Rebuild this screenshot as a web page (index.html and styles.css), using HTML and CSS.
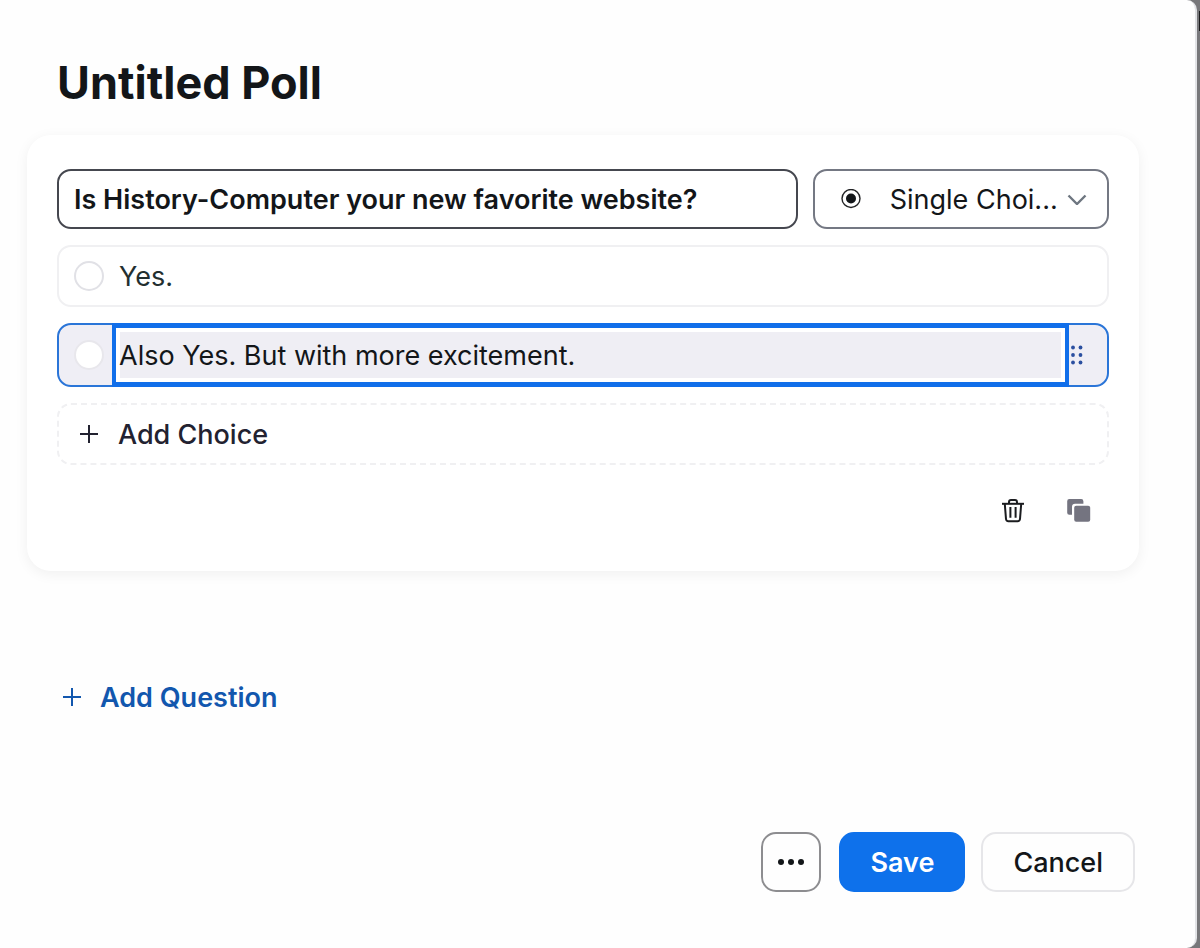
FILE: index.html
```html
<!DOCTYPE html>
<html lang="en">
<head>
    <meta charset="UTF-8">
    <meta name="viewport" content="width=device-width, initial-scale=1.0">
    <title>Untitled Poll</title>
    <link rel="stylesheet" href="styles.css">
</head>
<body>

    <main class="dialog">
        <h1>Untitled Poll</h1>

        <form class="card">
            <div class="question-row">
                <input class="question" type="text" aria-label="Question" value="Is History-Computer your new favorite website?">
                <div class="type">
                    <svg class="type-icon" width="20" height="20" viewBox="0 0 20 20" aria-hidden="true">
                        <circle cx="10" cy="9.5" r="9" fill="none" stroke="#222325" stroke-width="1.4"/>
                        <circle cx="10" cy="9.5" r="5" fill="#131619"/>
                    </svg>
                    <select class="type-select" aria-label="Question type">
                        <option>Single Choi...</option>
                    </select>
                    <svg class="type-arrow" width="20" height="12" viewBox="0 0 20 12" aria-hidden="true">
                        <path d="M1.5 2.5L10 11L18.5 2.5" fill="none" stroke="#6e7680" stroke-width="2.4"/>
                    </svg>
                </div>
            </div>

            <div class="choice">
                <input class="radio" type="radio" name="answer" aria-label="Choice 1">
                <input class="choice-text" type="text" aria-label="Choice 1 text" value="Yes.">
            </div>

            <div class="choice active">
                <input class="radio" type="radio" name="answer" aria-label="Choice 2">
                <input class="choice-text" type="text" aria-label="Choice 2 text" value="Also Yes. But with more excitement.">
                <svg class="handle" width="12" height="20" viewBox="0 0 12 20" fill="#2b4fa0" aria-hidden="true">
                    <circle cx="2" cy="2.5" r="1.9"/>
                    <circle cx="9.5" cy="2.5" r="1.9"/>
                    <circle cx="2" cy="10" r="1.9"/>
                    <circle cx="9.5" cy="10" r="1.9"/>
                    <circle cx="2" cy="17.5" r="1.9"/>
                    <circle cx="9.5" cy="17.5" r="1.9"/>
                </svg>
            </div>

            <button class="add-choice" type="button">
                <svg width="18" height="18" viewBox="0 0 18 18" aria-hidden="true">
                    <path d="M9 0V18M0 9H18" stroke="currentColor" stroke-width="2"/>
                </svg>
                Add Choice
            </button>

            <div class="tools">
                <button class="tool" type="button" aria-label="Delete">
                    <svg width="24" height="24" viewBox="0 0 24 24" fill="none" stroke="#1b1c1f" stroke-width="2" aria-hidden="true">
                        <path d="M1 4.8H23"/>
                        <path d="M8 4.5V3Q8 1 10 1H14Q16 1 16 3V4.5"/>
                        <path d="M3.8 5L5 20Q5.2 22.2 7.4 22.2H16.6Q18.8 22.2 19 20L20.2 5"/>
                        <path d="M9.4 8V18.8M14.6 8V18.8"/>
                    </svg>
                </button>
                <button class="tool" type="button" aria-label="Duplicate">
                    <svg width="24" height="24" viewBox="0 0 24 24" fill="#747480" aria-hidden="true">
                        <path d="M2.3 0H14.2Q16.4 0 16.4 2.2V4.8H8Q5 4.8 5 7.8V15.8H2.3Q0.2 15.8 0.2 13.8V2.2Q0.2 0 2.3 0Z"/>
                        <rect x="7.2" y="6.8" width="16" height="16" rx="2"/>
                    </svg>
                </button>
            </div>
        </form>

        <button class="add-question" type="button">
            <svg width="18" height="18" viewBox="0 0 18 18" aria-hidden="true">
                <path d="M9 0V18M0 9H18" stroke="currentColor" stroke-width="2"/>
            </svg>
            Add Question
        </button>

        <div class="actions">
            <button class="btn more" type="button" aria-label="More">
                <svg width="28" height="6" viewBox="0 0 28 6" fill="#131619" aria-hidden="true">
                    <circle cx="4" cy="3" r="3"/>
                    <circle cx="14" cy="3" r="3"/>
                    <circle cx="24" cy="3" r="3"/>
                </svg>
            </button>
            <button class="btn save" type="button">Save</button>
            <button class="btn cancel" type="button">Cancel</button>
        </div>
    </main>

</body>
</html>
```
FILE: styles.css
```css
* {
    box-sizing: border-box;
}

body {
    margin: 0;
    padding-right: 3px;
    background: #77777a linear-gradient(#1c1c1e, #1c1c1e) right 11px / 1px 20px no-repeat;
    font-family: Inter, "Liberation Sans", sans-serif;
    font-size: 27px;
    color: #131619;
}

button, input, select {
    font: inherit;
    color: inherit;
    margin: 0;
}

button {
    background: none;
    border: none;
    padding: 0;
    cursor: pointer;
}

svg {
    display: block;
    flex: none;
}

.dialog {
    display: flex;
    flex-direction: column;
    min-height: 100vh;
    padding: 55px 56px 56px 27px;
    background-color: #fefefe;
    border-right: 2px solid #e2e3e6;
    border-radius: 0 10px 10px 0;
}

h1 {
    margin: 0 30px 24px;
    font-size: 45px;
    line-height: 56px;
    font-weight: 700;
}

.card {
    display: flex;
    flex-direction: column;
    gap: 16px;
    padding: 34px 30px 48px;
    background-color: #fff;
    border-radius: 24px;
    box-shadow: 0 3px 14px rgba(0, 0, 0, 0.06);
}

.question-row {
    display: grid;
    grid-template-columns: 5fr 2fr;
    gap: 15px;
}

.question {
    min-width: 0;
    height: 60px;
    padding: 0 15px;
    border: 2px solid #45474f;
    border-radius: 14px;
    background: none;
    font-weight: 600;
}

.type {
    display: grid;
    grid-template-columns: 26px 20px 1fr 20px 20px;
    align-items: center;
    min-width: 0;
    height: 60px;
    border: 2px solid #747883;
    border-radius: 14px;
}

.type-icon {
    grid-area: 1 / 2;
}

.type-select {
    grid-area: 1 / 1 / 2 / 6;
    min-width: 0;
    height: 56px;
    padding: 0 44px 0 75px;
    border: none;
    background: none;
    appearance: none;
}

.type-arrow {
    grid-area: 1 / 4;
}

.choice {
    display: flex;
    align-items: center;
    height: 62px;
    padding: 0 38px 0 15px;
    border: 2px solid #f0f0f2;
    border-radius: 14px;
}

.radio {
    flex: none;
    width: 30px;
    height: 30px;
    border: 2px solid #e1e1e6;
    border-radius: 50%;
    background-color: #fff;
    appearance: none;
}

.choice-text {
    flex: 1;
    min-width: 0;
    height: 58px;
    margin-left: 8px;
    padding: 0 3px;
    border: 4px solid transparent;
    background: none;
    color: #232f30;
}

.active {
    height: 64px;
    padding-right: 24px;
    border-color: #2a75d8;
    background-color: #efeef5;
}

.active .choice-text {
    height: 64px;
    border: 5px solid #116fea;
    border-width: 5px 4px;
    background-color: #efeef4;
    box-shadow: inset 0 0 0 4px #fff;
    color: #131619;
}

.active .radio {
    border-color: #e8e7ec;
}

.handle {
    margin-left: 2px;
}

.add-choice {
    display: flex;
    align-items: center;
    gap: 20px;
    height: 62px;
    padding: 0 21px;
    border: 2px dashed #f0f0f2;
    border-radius: 14px;
    color: #222230;
    font-weight: 500;
}

.tools {
    display: flex;
    justify-content: flex-end;
    gap: 42px;
    margin-top: 18px;
    padding-right: 18px;
}

.add-question {
    display: flex;
    align-items: center;
    align-self: flex-start;
    gap: 19px;
    height: 60px;
    margin: 96px 36px;
    color: #1257ae;
    font-weight: 600;
}

.actions {
    display: flex;
    justify-content: flex-end;
    gap: 16px;
    margin-top: auto;
    padding-right: 4px;
}

.btn {
    height: 60px;
    padding: 0 30px;
    border: 2px solid #e6e6e9;
    border-radius: 15px;
    font-weight: 500;
}

.more {
    width: 60px;
    margin-right: 2px;
    padding: 0 14px;
    border-color: #8d8d90;
}

.save {
    padding: 0 29px;
    background-color: #0e71eb;
    border-color: #0e71eb;
    color: #fff;
    font-weight: 600;
}
```
